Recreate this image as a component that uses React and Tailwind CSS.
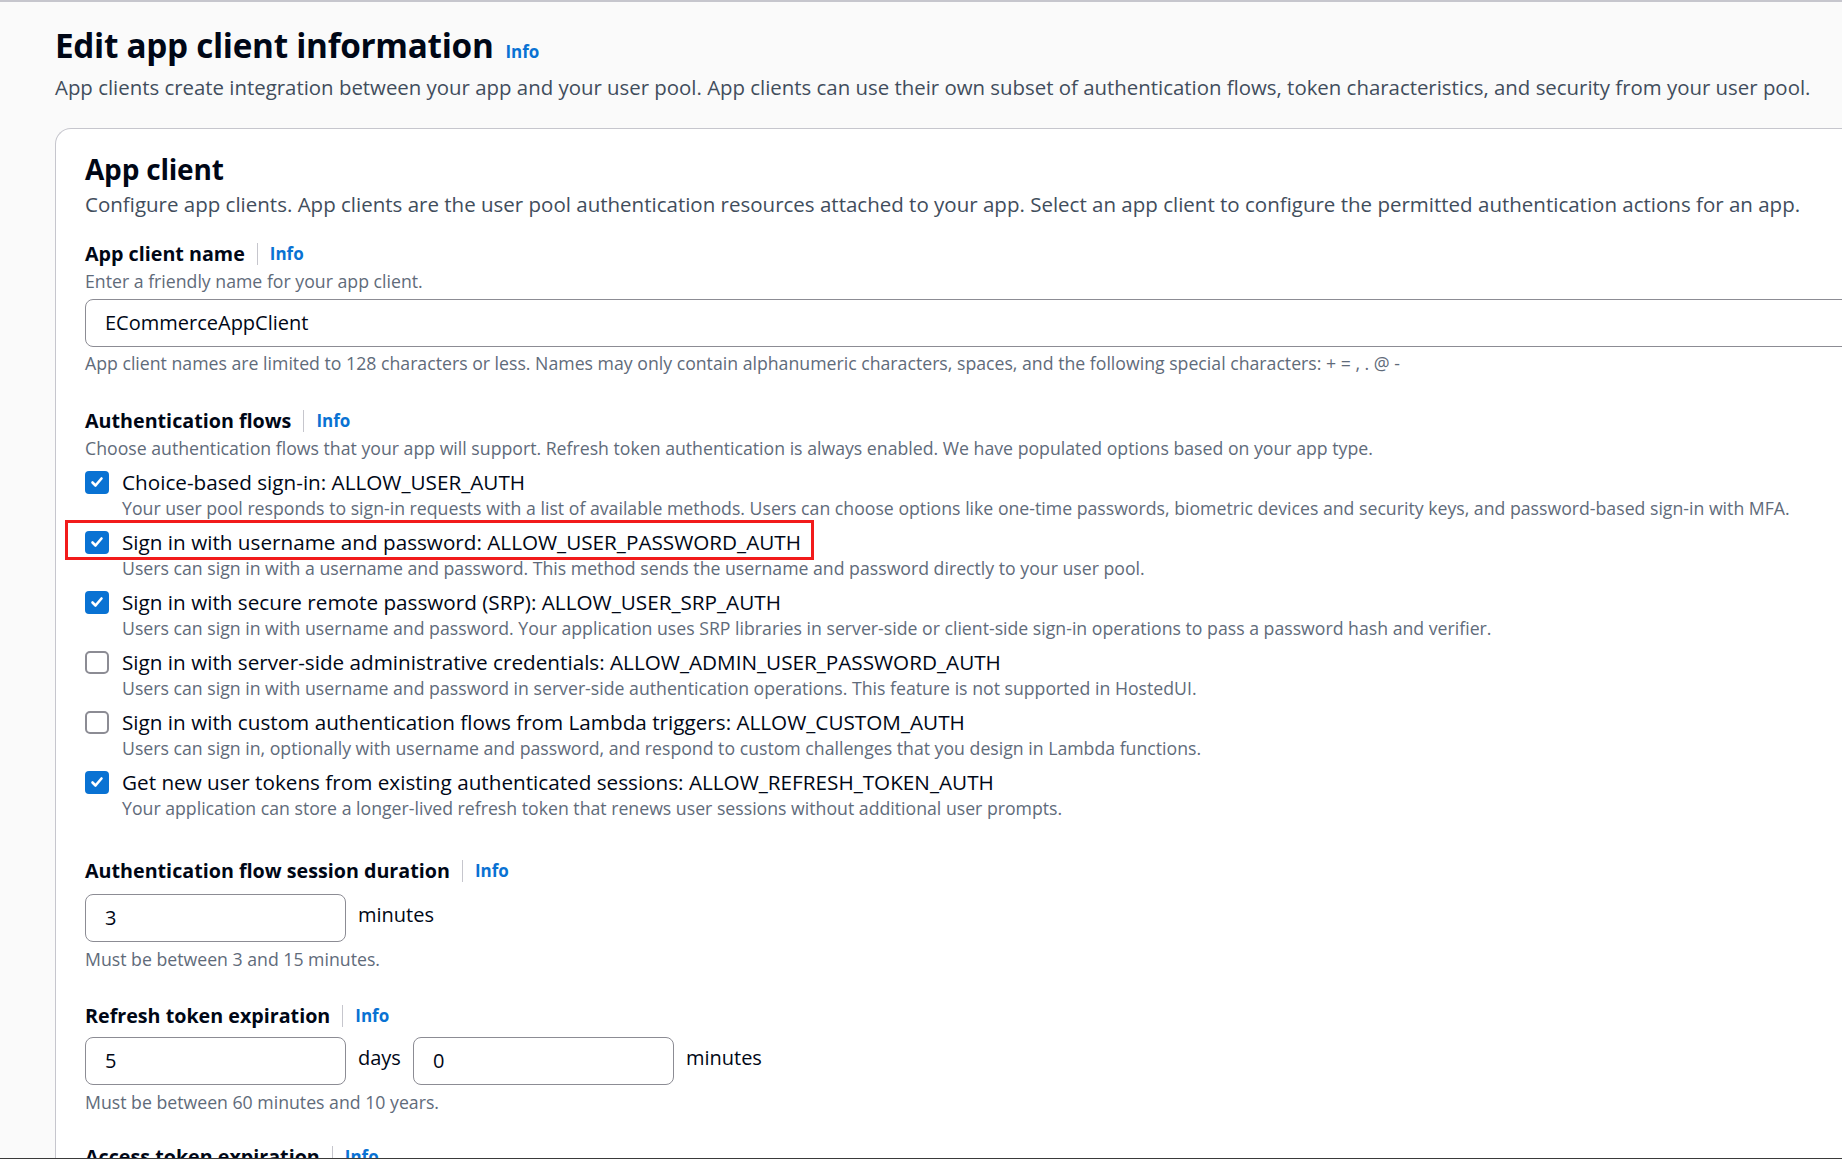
import React from 'react';

const flows = [
  {
    checked: true,
    label: 'Choice-based sign-in: ALLOW_USER_AUTH',
    desc: 'Your user pool responds to sign-in requests with a list of available methods. Users can choose options like one-time passwords, biometric devices and security keys, and password-based sign-in with MFA.',
  },
  {
    checked: true,
    highlight: true,
    label: 'Sign in with username and password: ALLOW_USER_PASSWORD_AUTH',
    desc: 'Users can sign in with a username and password. This method sends the username and password directly to your user pool.',
  },
  {
    checked: true,
    label: 'Sign in with secure remote password (SRP): ALLOW_USER_SRP_AUTH',
    desc: 'Users can sign in with username and password. Your application uses SRP libraries in server-side or client-side sign-in operations to pass a password hash and verifier.',
  },
  {
    checked: false,
    label: 'Sign in with server-side administrative credentials: ALLOW_ADMIN_USER_PASSWORD_AUTH',
    desc: 'Users can sign in with username and password in server-side authentication operations. This feature is not supported in HostedUI.',
  },
  {
    checked: false,
    label: 'Sign in with custom authentication flows from Lambda triggers: ALLOW_CUSTOM_AUTH',
    desc: 'Users can sign in, optionally with username and password, and respond to custom challenges that you design in Lambda functions.',
  },
  {
    checked: true,
    label: 'Get new user tokens from existing authenticated sessions: ALLOW_REFRESH_TOKEN_AUTH',
    desc: 'Your application can store a longer-lived refresh token that renews user sessions without additional user prompts.',
  },
];

const Checkbox = ({ checked }) =>
  checked ? (
    <span className="flex h-[23px] w-[24px] shrink-0 items-center justify-center rounded-[4px] bg-[#0972d3]">
      <svg width="16" height="16" viewBox="0 0 16 16" fill="none">
        <path d="M3.5 8.5l3 3 6-7" stroke="#fff" strokeWidth="2.6" strokeLinecap="round" strokeLinejoin="round" />
      </svg>
    </span>
  ) : (
    <span className="block h-[23px] w-[24px] shrink-0 rounded-[5px] border-2 border-[#8c8c94] bg-white" />
  );

const FieldLabel = ({ children }) => (
  <div className="flex h-[26px] items-center">
    <span className="text-[19.7px] font-bold leading-[26px] text-[#000716]">{children}</span>
    <span className="mx-[12px] h-[22px] w-px bg-[#c6c6cd]" />
    <span className="text-[17px] font-bold leading-[26px] text-[#0972d3]">Info</span>
  </div>
);

const Hint = ({ className = '', children }) => (
  <p className={`text-[17.7px] leading-[22px] text-[#5f6b7a] ${className}`}>{children}</p>
);

const NumberBox = ({ value }) => (
  <div className="flex h-[48px] w-[261px] shrink-0 items-center rounded-[8px] border border-[#8c8c94] bg-white pl-[19px] text-[20px] text-[#000716]">
    {value}
  </div>
);

const Unit = ({ children }) => (
  <span className="mx-[12px] mt-[7px] text-[20px] leading-[28px] text-[#000716]">{children}</span>
);

export default function App() {
  return (
    <div className="h-[1159px] overflow-hidden border-t-2 border-b border-t-[#c6c6cd] border-b-[#3a3a3a] bg-[#fafafa] font-['Open_Sans',sans-serif]">
      <div className="pl-[55px] pt-[23px]">
        <div className="flex items-baseline">
          <h1 className="text-[33.3px] font-bold leading-[40px] tracking-[-0.3px] text-[#000716]">
            Edit app client information
          </h1>
          <span className="ml-[12px] text-[17px] font-bold text-[#0972d3]">Info</span>
        </div>
        <p className="mt-[8px] whitespace-nowrap text-[20.4px] leading-[28px] text-[#414d5c]">
          App clients create integration between your app and your user pool. App clients can use their own subset of authentication flows, token characteristics, and security from your user pool.
        </p>
      </div>

      <div className="ml-[55px] mt-[27px] w-[1900px] rounded-tl-[16px] border-l border-t border-[#c6c6cd] bg-white pl-[29px] pt-[24px]">
        <h2 className="text-[28px] font-bold leading-[32px] tracking-[-0.2px] text-[#000716]">App client</h2>
        <p className="mt-[5px] whitespace-nowrap text-[20.5px] leading-[28px] text-[#414d5c]">
          Configure app clients. App clients are the user pool authentication resources attached to your app. Select an app client to configure the permitted authentication actions for an app.
        </p>

        <div className="mt-[23px]">
          <FieldLabel>App client name</FieldLabel>
          <Hint className="mt-[3px]">Enter a friendly name for your app client.</Hint>
          <div className="mt-[7px] flex h-[48px] items-center rounded-[8px] border border-[#8c8c94] bg-white pl-[19px] text-[20px] text-[#000716]">
            ECommerceAppClient
          </div>
          <Hint className="mt-[5px] whitespace-nowrap">
            App client names are limited to 128 characters or less. Names may only contain alphanumeric characters, spaces, and the following special characters: + = , . @ -
          </Hint>
        </div>

        <div className="mt-[34px]">
          <FieldLabel>Authentication flows</FieldLabel>
          <Hint className="mt-[3px] whitespace-nowrap">
            Choose authentication flows that your app will support. Refresh token authentication is always enabled. We have populated options based on your app type.
          </Hint>
          <div className="mt-[11px] flex flex-col gap-[11px]">
            {flows.map((f) => (
              <div key={f.label} className="relative">
                <div className="flex h-[24px] items-center gap-[13px]">
                  <Checkbox checked={f.checked} />
                  <span className="whitespace-nowrap text-[20.7px] leading-[24px] text-[#000716]">{f.label}</span>
                </div>
                <Hint className="mt-[3px] whitespace-nowrap pl-[37px]">{f.desc}</Hint>
                {f.highlight && (
                  <div className="pointer-events-none absolute left-[-20px] top-[-10px] h-[40px] w-[749px] border-[3px] border-[#f21b1b]" />
                )}
              </div>
            ))}
          </div>
        </div>

        <div className="mt-[39px]">
          <FieldLabel>Authentication flow session duration</FieldLabel>
          <div className="mt-[10px] flex items-start">
            <NumberBox value="3" />
            <Unit>minutes</Unit>
          </div>
          <Hint className="mt-[6px]">Must be between 3 and 15 minutes.</Hint>
        </div>

        <div className="mt-[33px]">
          <FieldLabel>Refresh token expiration</FieldLabel>
          <div className="mt-[8px] flex items-start">
            <NumberBox value="5" />
            <Unit>days</Unit>
            <NumberBox value="0" />
            <Unit>minutes</Unit>
          </div>
          <Hint className="mt-[6px]">Must be between 60 minutes and 10 years.</Hint>
        </div>

        <div className="mt-[31px]">
          <FieldLabel>Access token expiration</FieldLabel>
        </div>
      </div>
    </div>
  );
}
